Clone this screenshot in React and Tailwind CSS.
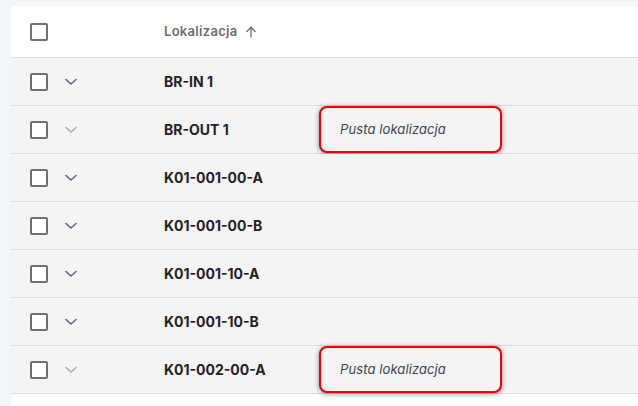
import React from 'react';

const rows = [
  { name: 'BR-IN 1', dim: false },
  { name: 'BR-OUT 1', dim: true, empty: true },
  { name: 'K01-001-00-A', dim: false },
  { name: 'K01-001-00-B', dim: false },
  { name: 'K01-001-10-A', dim: false },
  { name: 'K01-001-10-B', dim: false },
  { name: 'K01-002-00-A', dim: true, empty: true },
];

function Checkbox() {
  return <div className="w-[18px] h-[18px] border-2 border-[#6f6f6f] rounded-[2px] bg-white shrink-0" />;
}

function Chevron({ dim }) {
  return (
    <svg width="14" height="8" viewBox="0 0 14 8" className="shrink-0">
      <polyline
        points="2,1.5 7,6 12,1.5"
        fill="none"
        stroke={dim ? '#a8adb2' : '#56657a'}
        strokeWidth="1.5"
        strokeLinecap="round"
        strokeLinejoin="round"
      />
    </svg>
  );
}

export default function App() {
  return (
    <div className="w-[638px] h-[406px] bg-[#f2f6fa] pt-[6px] pl-[11px] overflow-hidden" style={{ fontFamily: 'Inter, "Noto Sans", sans-serif' }}>
      <div className="bg-white rounded-tl-[4px] h-full">
        <div className="h-[52px] flex items-center border-b border-[#dcdcdc]">
          <div className="pl-[19px] w-[153px]">
            <Checkbox />
          </div>
          <span className="text-[13px] font-semibold text-[#6b6e72] tracking-[0.3px]">Lokalizacja</span>
          <svg width="12" height="12" viewBox="0 0 12 12" className="ml-[7px]">
            <path d="M6 11V1.5M1.8 5.5L6 1.3l4.2 4.2" fill="none" stroke="#6b6e72" strokeWidth="1.3" strokeLinecap="round" strokeLinejoin="round" />
          </svg>
        </div>
        {rows.map((r) => (
          <div key={r.name} className="relative h-[48px] flex items-center bg-[#f4f4f4] border-b border-[#dcdcdc]">
            <div className="pl-[19px] w-[153px] flex items-center gap-[16px]">
              <Checkbox />
              <Chevron dim={r.dim} />
            </div>
            <span className="text-[14px] font-bold text-[#1f2328] -mt-[1px]">{r.name}</span>
            {r.empty && (
              <div className="absolute left-[308px] top-0 w-[183px] h-[47px] border-2 border-[#f00000] rounded-[8px] bg-[#f4f4f4] shadow-[0_1px_5px_rgba(0,0,0,0.45)] flex items-center pl-[19px]">
                <span className="text-[13px] italic text-[#3c4450] tracking-[0.1px]">Pusta lokalizacja</span>
              </div>
            )}
          </div>
        ))}
      </div>
    </div>
  );
}
